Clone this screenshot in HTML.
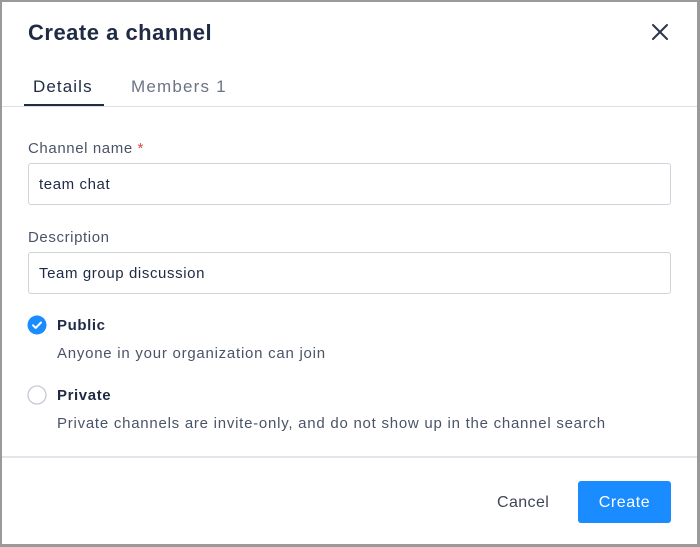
<!DOCTYPE html>
<html><head><style>
*{margin:0;padding:0;box-sizing:border-box}
body{width:700px;height:547px;background:#fff;font-family:"Liberation Sans",sans-serif;color:#1f2a44;position:relative;overflow:hidden}
.frame{position:absolute;left:0;top:0;width:700px;height:547px;border:2px solid #9a9a9a;border-right-width:3px;border-bottom-width:3px}
.a{position:absolute;white-space:nowrap}
.inp{position:absolute;left:28px;width:643px;height:42px;border:1px solid #cfd3da;border-radius:3px;padding-left:10px;line-height:41px;font-size:15px;color:#1f2a44;letter-spacing:0.6px}
.lbl{font-size:15px;color:#4a5468;letter-spacing:0.6px}
.desc{font-size:15px;color:#4a5468;letter-spacing:0.75px}
</style></head><body>
<div class="frame"></div>
<div class="a" style="left:28px;top:20px;font-size:22px;font-weight:bold;color:#1f2a44;letter-spacing:0.5px">Create a channel</div>
<svg class="a" style="left:651px;top:23px" width="18" height="18" viewBox="0 0 18 18"><path d="M2 2L16 16M16 2L2 16" stroke="#2b3448" stroke-width="2" stroke-linecap="round"/></svg>
<div class="a" style="left:33px;top:77px;font-size:17px;color:#1f2a44;letter-spacing:1.1px">Details</div>
<div class="a" style="left:131px;top:77px;font-size:17px;color:#6b7385;letter-spacing:1.2px">Members 1</div>
<div class="a" style="left:2px;top:106px;width:695px;height:1px;background:#dcdfe5"></div>
<div class="a" style="left:24px;top:104px;width:80px;height:2px;background:#1f2a44"></div>
<div class="a lbl" style="left:28px;top:140px">Channel name <span style="color:#e0453a">*</span></div>
<div class="inp" style="top:163px">team chat</div>
<div class="a lbl" style="left:28px;top:229px">Description</div>
<div class="inp" style="top:252px">Team group discussion</div>
<svg class="a" style="left:27px;top:315px" width="20" height="20" viewBox="0 0 20 20"><circle cx="10" cy="10" r="9.5" fill="#1a8cff"/><path d="M6 10.3l2.7 2.6L14 7.5" stroke="#fff" stroke-width="2" fill="none" stroke-linecap="round" stroke-linejoin="round"/></svg>
<div class="a" style="left:57px;top:317px;font-size:15px;font-weight:bold;color:#1f2a44;letter-spacing:0.6px">Public</div>
<div class="a desc" style="left:57px;top:345px">Anyone in your organization can join</div>
<svg class="a" style="left:27px;top:385px" width="20" height="20" viewBox="0 0 20 20"><circle cx="10" cy="10" r="9" fill="#fff" stroke="#c5cad3" stroke-width="1.3"/></svg>
<div class="a" style="left:57px;top:387px;font-size:15px;font-weight:bold;color:#1f2a44;letter-spacing:0.6px">Private</div>
<div class="a desc" style="left:57px;top:415px">Private channels are invite-only, and do not show up in the channel search</div>
<div class="a" style="left:2px;top:456px;width:695px;height:2px;background:#e3e5ea"></div>
<div class="a" style="left:497px;top:494px;font-size:16px;color:#3d4658;letter-spacing:0.4px">Cancel</div>
<div class="a" style="left:578px;top:481px;width:93px;height:42px;background:#1a8cff;border-radius:3px;color:#fff;font-size:16px;text-align:center;line-height:43px;letter-spacing:0.6px">Create</div>
</body></html>
